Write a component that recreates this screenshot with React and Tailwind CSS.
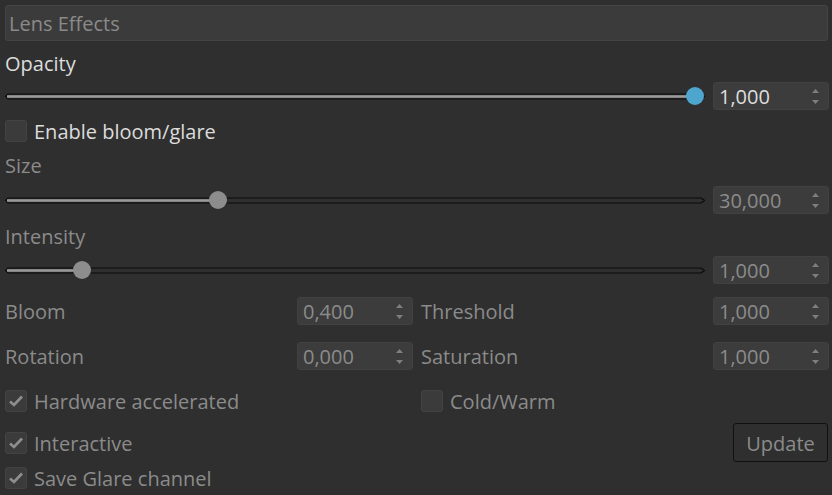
import React from "react";

const FONT = { fontFamily: '"Open Sans", "Noto Sans", sans-serif' };

function Track({ width, fill }) {
  // outline shape with pointed ends; gray part up to the knob
  return (
    <svg width={width} height="7" viewBox={`0 0 ${width} 7`} className="block">
      <polygon
        points={`0.5,3.5 3,1 ${width - 4},1 ${width - 0.5},3.5 ${width - 4},6 3,6`}
        fill="none"
        stroke="#0b0b0b"
        strokeWidth="1.2"
      />
      <rect x="2" y="2.2" width={Math.max(fill - 2, 0)} height="2.6" fill="#9a9a9a" />
    </svg>
  );
}

function Slider({ value, accent, width = 700 }) {
  const knob = accent ? "bg-[#4ea6cf]" : "bg-[#8d8d8d]";
  return (
    <div className="relative h-[28px] flex items-center" style={{ width }}>
      <Track width={width} fill={value} />
      <div
        className={`absolute top-[5px] w-[18px] h-[18px] rounded-full ${knob}`}
        style={{ left: value - 9 }}
      />
    </div>
  );
}

function SpinBox({ value, bright }) {
  return (
    <div className="w-[116px] h-[28px] bg-[#3c3c3c] rounded-[3px] border border-[#414141] flex items-center justify-between pl-[5px] pr-[9px]">
      <span className={`pt-[2px] text-[20px] leading-none ${bright ? "text-[#dedede]" : "text-[#8b8b8b]"}`}>
        {value}
      </span>
      <div className="flex flex-col gap-[7px]">
        <svg width="7" height="4" viewBox="0 0 7 4">
          <polygon points="3.5,0 7,4 0,4" fill="#7e7e7e" />
        </svg>
        <svg width="7" height="4" viewBox="0 0 7 4">
          <polygon points="0,0 7,0 3.5,4" fill="#7e7e7e" />
        </svg>
      </div>
    </div>
  );
}

function CheckBox({ label, checked, bright }) {
  return (
    <div className="flex items-center h-[22px]">
      <div className="w-[22px] h-[22px] bg-[#3b3b3b] border border-[#434343] rounded-[3px] flex items-center justify-center">
        {checked && (
          <svg width="16" height="14" viewBox="0 0 16 14">
            <polyline points="2,7.5 6,11 14,2.5" fill="none" stroke="#8e8e8e" strokeWidth="2.7" />
          </svg>
        )}
      </div>
      <span className={`ml-[7px] pt-[2px] text-[20px] leading-none ${bright ? "text-[#dcdcdc]" : "text-[#8b8b8b]"}`}>
        {label}
      </span>
    </div>
  );
}

function Label({ children, bright }) {
  return (
    <div className={`h-[22px] pt-[2px] flex items-center text-[20px] leading-none ${bright ? "text-[#dcdcdc]" : "text-[#8b8b8b]"}`}>
      {children}
    </div>
  );
}

export default function App() {
  return (
    <div className="w-[832px] h-[495px] bg-[#2f2f2f] overflow-hidden" style={FONT}>
      <div className="pt-[5px] pl-[5px] pr-[3px] flex flex-col">
        <div className="h-[36px] mr-[1px] bg-[#3b3b3b] border border-[#444444] rounded-[3px] flex items-center pl-[3px] pt-[2px] text-[20px] text-[#8a8a8a]">
          Lens Effects
        </div>

        <div className="mt-[11px]">
          <Label bright>Opacity</Label>
        </div>
        <div className="mt-[8px] flex items-center gap-[8px]">
          <Slider value={690} accent width={700} />
          <SpinBox value="1,000" bright />
        </div>

        <div className="mt-[10px]">
          <CheckBox label="Enable bloom/glare" bright />
        </div>

        <div className="mt-[12px]">
          <Label>Size</Label>
        </div>
        <div className="mt-[10px] flex items-center gap-[8px]">
          <Slider value={213} width={700} />
          <SpinBox value="30,000" />
        </div>

        <div className="mt-[11px]">
          <Label>Intensity</Label>
        </div>
        <div className="mt-[9px] flex items-center gap-[8px]">
          <Slider value={77} width={700} />
          <SpinBox value="1,000" />
        </div>

        <div className="mt-[13px] flex items-center h-[28px]">
          <div className="w-[292px]"><Label>Bloom</Label></div>
          <SpinBox value="0,400" />
          <div className="ml-[8px] flex-1"><Label>Threshold</Label></div>
          <SpinBox value="1,000" />
        </div>
        <div className="mt-[17px] flex items-center h-[28px]">
          <div className="w-[292px]"><Label>Rotation</Label></div>
          <SpinBox value="0,000" />
          <div className="ml-[8px] flex-1"><Label>Saturation</Label></div>
          <SpinBox value="1,000" />
        </div>

        <div className="mt-[20px] flex items-center">
          <div className="w-[416px]">
            <CheckBox label="Hardware accelerated" checked />
          </div>
          <CheckBox label="Cold/Warm" />
        </div>

        <div className="mt-[11px] h-[39px] flex items-center justify-between">
          <CheckBox label="Interactive" checked />
          <button className="w-[95px] h-[39px] mr-[1px] pt-[2px] border border-[#101010] rounded-[3px] text-[20px] text-[#8b8b8b] flex items-center justify-center">
            Update
          </button>
        </div>

        <div className="mt-[5px]">
          <CheckBox label="Save Glare channel" checked />
        </div>
      </div>
    </div>
  );
}
